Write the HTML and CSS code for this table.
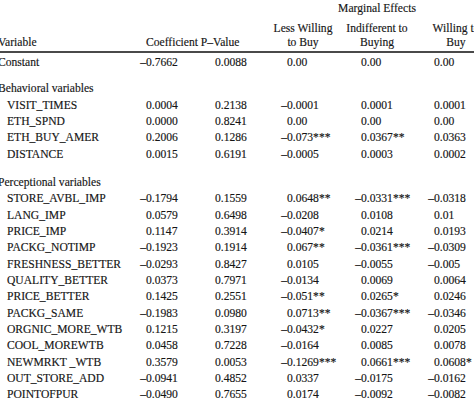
FILE: index.html
```html
<!DOCTYPE html>
<html>
<head>
<meta charset="utf-8">
<link rel="stylesheet" href="styles.css">
</head>
<body>
<table class="tbl">
  <colgroup>
    <col class="c-var"><col class="c-coef"><col class="c-p"><col class="c-less"><col class="c-ind"><col class="c-will">
  </colgroup>
  <thead>
    <tr class="h1">
      <th></th><th></th><th></th>
      <th colspan="3" class="me">Marginal Effects</th>
    </tr>
    <tr class="h2">
      <th class="hv">Variable</th>
      <th colspan="2" class="hc">Coefficient P–Value</th>
      <th class="hm">Less Willing<br>to Buy</th>
      <th class="hm">Indifferent to<br>Buying</th>
      <th class="hm">Willing to<br>Buy</th>
    </tr>
  </thead>
  <tbody>
    <tr class="first"><td class="cat">Constant</td><td class="n"><span class="m">–</span>0.7662</td><td class="n">0.0088</td><td class="n">0.00</td><td class="n">0.00</td><td class="n">0.00</td></tr>
    <tr class="sec"><td class="cat" colspan="6">Behavioral variables</td></tr>
    <tr><td class="v">VISIT_TIMES</td><td class="n">0.0004</td><td class="n">0.2138</td><td class="n"><span class="m">–</span>0.0001</td><td class="n">0.0001</td><td class="n">0.0001</td></tr>
    <tr><td class="v">ETH_SPND</td><td class="n">0.0000</td><td class="n">0.8241</td><td class="n">0.00</td><td class="n">0.00</td><td class="n">0.00</td></tr>
    <tr><td class="v">ETH_BUY_AMER</td><td class="n">0.2006</td><td class="n">0.1286</td><td class="n"><span class="m">–</span>0.073***</td><td class="n">0.0367**</td><td class="n">0.0363</td></tr>
    <tr><td class="v">DISTANCE</td><td class="n">0.0015</td><td class="n">0.6191</td><td class="n"><span class="m">–</span>0.0005</td><td class="n">0.0003</td><td class="n">0.0002</td></tr>
    <tr class="sec sec2"><td class="cat" colspan="6">Perceptional variables</td></tr>
    <tr><td class="v">STORE_AVBL_IMP</td><td class="n"><span class="m">–</span>0.1794</td><td class="n">0.1559</td><td class="n">0.0648**</td><td class="n"><span class="m">–</span>0.0331***</td><td class="n"><span class="m">–</span>0.0318</td></tr>
    <tr><td class="v">LANG_IMP</td><td class="n">0.0579</td><td class="n">0.6498</td><td class="n"><span class="m">–</span>0.0208</td><td class="n">0.0108</td><td class="n">0.01</td></tr>
    <tr><td class="v">PRICE_IMP</td><td class="n">0.1147</td><td class="n">0.3914</td><td class="n"><span class="m">–</span>0.0407*</td><td class="n">0.0214</td><td class="n">0.0193</td></tr>
    <tr><td class="v">PACKG_NOTIMP</td><td class="n"><span class="m">–</span>0.1923</td><td class="n">0.1914</td><td class="n">0.067**</td><td class="n"><span class="m">–</span>0.0361***</td><td class="n"><span class="m">–</span>0.0309</td></tr>
    <tr><td class="v">FRESHNESS_BETTER</td><td class="n"><span class="m">–</span>0.0293</td><td class="n">0.8427</td><td class="n">0.0105</td><td class="n"><span class="m">–</span>0.0055</td><td class="n"><span class="m">–</span>0.005</td></tr>
    <tr><td class="v">QUALITY_BETTER</td><td class="n">0.0373</td><td class="n">0.7971</td><td class="n"><span class="m">–</span>0.0134</td><td class="n">0.0069</td><td class="n">0.0064</td></tr>
    <tr><td class="v">PRICE_BETTER</td><td class="n">0.1425</td><td class="n">0.2551</td><td class="n"><span class="m">–</span>0.051**</td><td class="n">0.0265*</td><td class="n">0.0246</td></tr>
    <tr><td class="v">PACKG_SAME</td><td class="n"><span class="m">–</span>0.1983</td><td class="n">0.0980</td><td class="n">0.0713**</td><td class="n"><span class="m">–</span>0.0367***</td><td class="n"><span class="m">–</span>0.0346</td></tr>
    <tr><td class="v">ORGNIC_MORE_WTB</td><td class="n">0.1215</td><td class="n">0.3197</td><td class="n"><span class="m">–</span>0.0432*</td><td class="n">0.0227</td><td class="n">0.0205</td></tr>
    <tr><td class="v">COOL_MOREWTB</td><td class="n">0.0458</td><td class="n">0.7228</td><td class="n"><span class="m">–</span>0.0164</td><td class="n">0.0085</td><td class="n">0.0078</td></tr>
    <tr><td class="v">NEWMRKT _WTB</td><td class="n">0.3579</td><td class="n">0.0053</td><td class="n"><span class="m">–</span>0.1269***</td><td class="n">0.0661***</td><td class="n">0.0608*</td></tr>
    <tr><td class="v">OUT_STORE_ADD</td><td class="n"><span class="m">–</span>0.0941</td><td class="n">0.4852</td><td class="n">0.0337</td><td class="n"><span class="m">–</span>0.0175</td><td class="n"><span class="m">–</span>0.0162</td></tr>
    <tr><td class="v">POINTOFPUR</td><td class="n"><span class="m">–</span>0.0490</td><td class="n">0.7655</td><td class="n">0.0174</td><td class="n"><span class="m">–</span>0.0092</td><td class="n"><span class="m">–</span>0.0082</td></tr>
  </tbody>
</table>
</body>
</html>
```
FILE: styles.css
```css
html, body {
  margin: 0;
  padding: 0;
  background: #ffffff;
  overflow: hidden;
}
body {
  font-family: "Liberation Serif", "Times New Roman", serif;
  font-size: 11.6px;
  color: #151515;
  -webkit-text-stroke: 0.15px #151515;
}
.tbl {
  border-collapse: collapse;
  table-layout: fixed;
  width: 500px;
  margin-left: -2px;
}
.c-var { width: 138px; }
.c-coef { width: 69px; }
.c-p { width: 61px; }
.c-less { width: 74px; }
.c-ind { width: 74px; }
.c-will { width: 84px; }
.tbl th, .tbl td {
  padding: 0;
  font-weight: normal;
  white-space: nowrap;
  vertical-align: bottom;
}
.h1 th {
  height: 17px;
  line-height: 17px;
}
.me {
  text-align: center;
  padding-right: 10px !important;
}
.h2 th {
  line-height: 14px;
  padding-top: 5px;
  padding-bottom: 1px;
  border-bottom: 2px solid #4a4a4a;
}
.hv { text-align: left; }
.hc { text-align: left; padding-left: 10px !important; }
.hm { text-align: center; }
.tbl td {
  height: 16.33px;
  line-height: 16.33px;
}
.first td { padding-top: 2px; }
.sec td { padding-top: 10px; }
.sec2 td { padding-top: 12px; }
.cat { text-align: left; }
.v { padding-left: 9px !important; }
.n {
  text-align: left;
}
.tbl td.n:nth-child(2),
.tbl td.n:nth-child(3) { padding-left: 10px; }
.tbl td.n:nth-child(4),
.tbl td.n:nth-child(5) { padding-left: 21px; }
.tbl td.n:nth-child(6) { padding-left: 20px; }
.m {
  display: inline-block;
  width: 0.5em;
  margin-left: -0.5em;
}
```
